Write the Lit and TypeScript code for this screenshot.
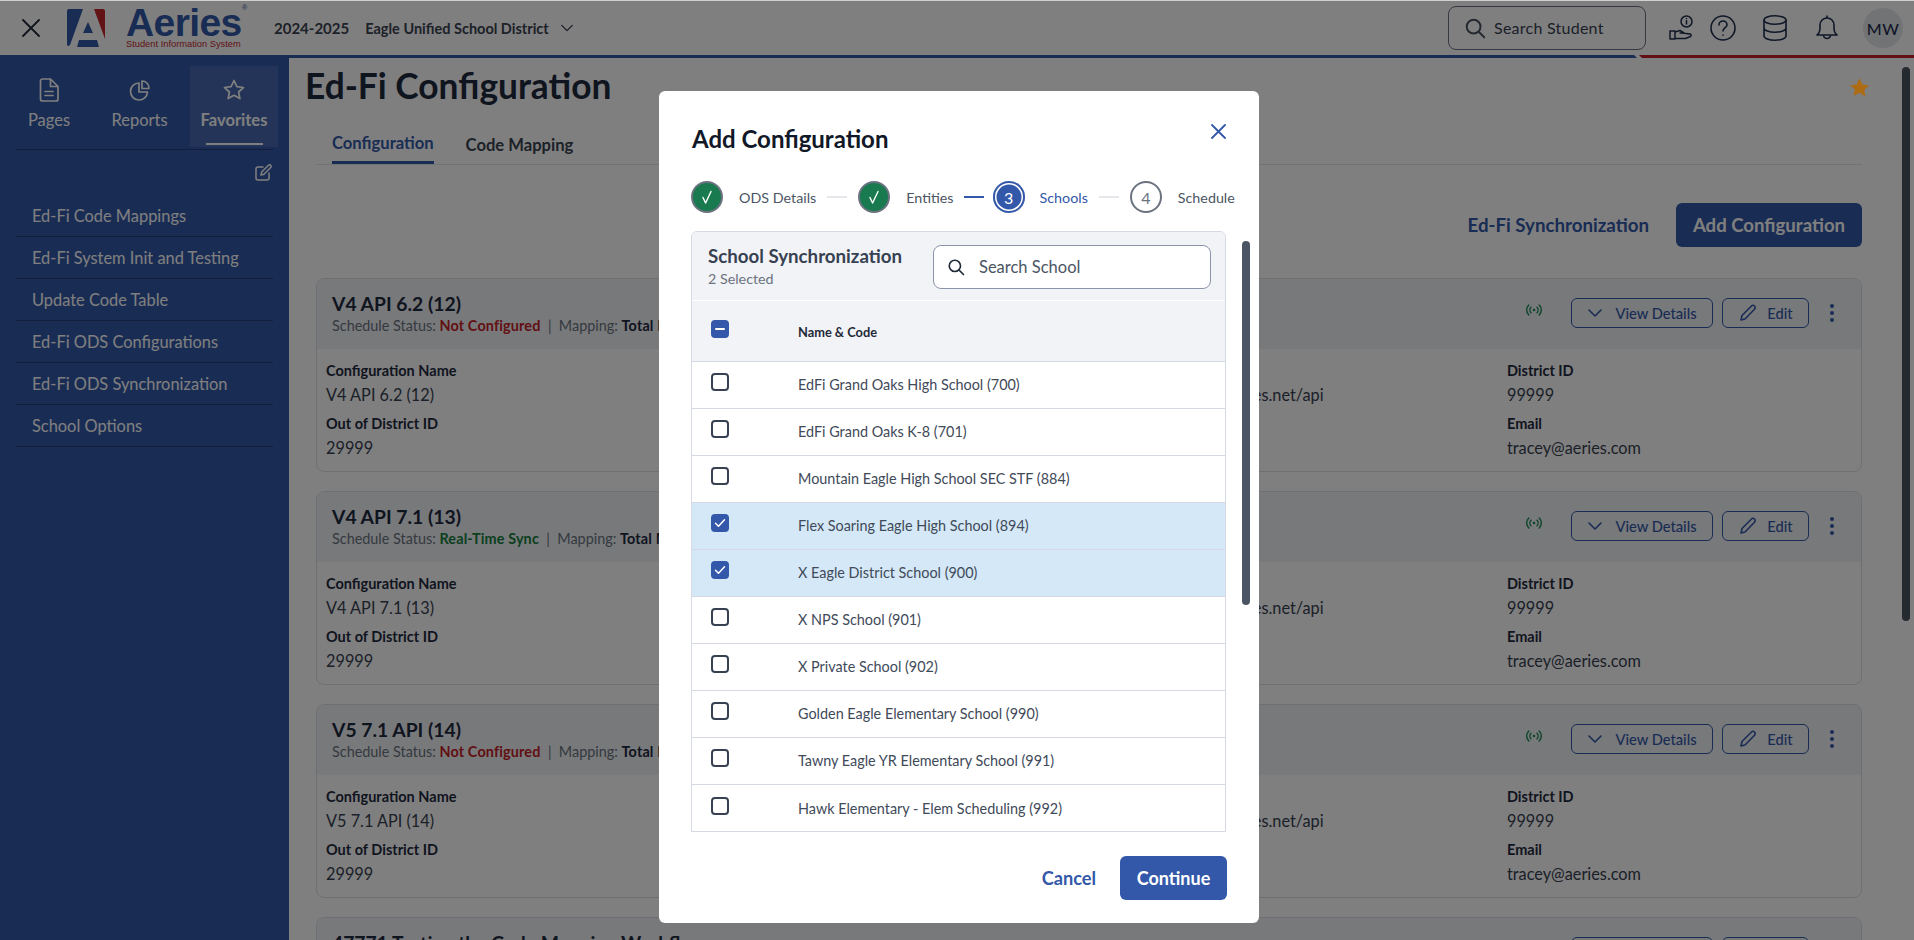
import { LitElement, html, css, svg } from "lit";
import { customElement } from "lit/decorators.js";

const chevron = (size: number) => html`<svg width=${size} height=${size} viewBox="0 0 16 16" fill="none" stroke="currentColor" stroke-width="1.6" stroke-linecap="round" stroke-linejoin="round"><path d="M2 5l6 6 6-6"/></svg>`;
const searchIcon = (size: number) => html`<svg width=${size} height=${size} viewBox="0 0 24 24" fill="none" stroke="currentColor" stroke-width="2.2" stroke-linecap="round"><circle cx="10.5" cy="10.500" r="7.5"/><path d="M16 16l6 6"/></svg>`;
const check = svg`<path d="M4.5 9.3l3 3 6-6.6" fill="none" stroke="#fff" stroke-width="1.5" stroke-linecap="round" stroke-linejoin="round"/>`;
const bigCheck = svg`<path d="M5 9.500l2.600 5.500L13 3.500" fill="none" stroke="#fff" stroke-width="1.400" stroke-linecap="round" stroke-linejoin="round"/>`;

const cards = [
  { name: "V4 API 6.2 (12)", status: "Not Configured", ok: false },
  { name: "V4 API 7.1 (13)", status: "Real-Time Sync", ok: true },
  { name: "V5 7.1 API (14)", status: "Not Configured", ok: false },
  { name: "47771 Testing the Code Mapping Workflow", status: "Not Configured", ok: false },
];
const schools = [
  ["EdFi Grand Oaks High School (700)", false],
  ["EdFi Grand Oaks K-8 (701)", false],
  ["Mountain Eagle High School SEC STF (884)", false],
  ["Flex Soaring Eagle High School (894)", true],
  ["X Eagle District School (900)", true],
  ["X NPS School (901)", false],
  ["X Private School (902)", false],
  ["Golden Eagle Elementary School (990)", false],
  ["Tawny Eagle YR Elementary School (991)", false],
  ["Hawk Elementary - Elem Scheduling (992)", false],
] as [string, boolean][];
const links = ["Ed-Fi Code Mappings", "Ed-Fi System Init and Testing", "Update Code Table", "Ed-Fi ODS Configurations", "Ed-Fi ODS Synchronization", "School Options"];

@customElement("app-root")
export class AppRoot extends LitElement {
  static styles = css`
    :host { display: block; width: 1914px; height: 940px; overflow: hidden; position: relative; font-family: Lato, "Noto Sans", sans-serif; color: #1f2937; background: #fff; }
    * { box-sizing: border-box; }
    svg { display: block; flex: none; }
    .page { height: 940px; border-top: 1px solid #d0d0d0; display: flex; flex-direction: column; overflow: hidden; }
    .topbar { height: 54px; flex: none; display: flex; align-items: center; padding-right: 11px; color: #1f2f4f; }
    .x { margin-left: 22px; color: #1f2937; }
    .logo { margin-left: 27px; }
    .brand { margin-left: 21px; display: flex; flex-direction: column; width: 122px; }
    .aeries { font: 700 39px/31px "Liberation Sans", Arial, sans-serif; color: #3358a9; letter-spacing: -0.6px; height: 31px; position: relative; }
    .aeries sup { position: absolute; left: 116px; top: -7px; font-size: 7px; line-height: 16px; font-weight: 400; letter-spacing: 0; }
    .tagline { font: 400 9.3px/10px "Liberation Sans", Arial, sans-serif; color: #c2272d; white-space: nowrap; margin-top: 1px; }
    .year { margin-left: 26px; font-size: 15px; font-weight: 700; color: #3b4351; }
    .district { margin-left: 16px; font-size: 14.5px; font-weight: 700; color: #3b4351; }
    .dchev { margin-left: 11px; color: #3b4351; }
    .right { margin-left: auto; display: flex; align-items: center; }
    .stud { width: 198px; height: 44px; border: 1px solid #6b7280; border-radius: 8px; display: flex; align-items: center; padding-left: 15px; gap: 8px; font-size: 16px; color: #374151; margin-top: -1px; letter-spacing: .25px; }
    .stud svg { color: #4b5563; }
    .hand { margin-left: 23px; } .help { margin-left: 17px; } .db { margin-left: 27px; } .bell { margin-left: 29px; }
    .avatar { margin-left: 25px; width: 40px; height: 40px; border-radius: 50%; background: #e5e7eb; display: flex; align-items: center; justify-content: center; font-size: 16px; font-weight: 500; color: #1f2f4f; letter-spacing: .5px; }
    .rule { height: 3px; flex: none; display: flex; }
    .rule .blue { width: 1637px; background: #3358a9; clip-path: polygon(0 0, 1634px 0, 1637px 100%, 0 100%); }
    .rule .red { flex: 1; margin-left: 2px; background: #c42126; clip-path: polygon(0 0, 100% 0, 100% 100%, 3px 100%); }
    .body { flex: 1; display: flex; min-height: 0; }
    .side { width: 289px; flex: none; background: #3359a9; color: #fff; }
    .tabs { display: grid; grid-template-columns: 88px 93px 92px; margin: 8px 0 0 5px; }
    .stab { height: 81px; padding-top: 12px; display: flex; flex-direction: column; align-items: center; font-size: 16.5px; line-height: 20px; }
    .stab span { margin-top: 8px; }
    .stab.on { margin-left: 4px; background: rgba(255,255,255,.1); font-weight: 700; }
    .stab.on span::after { content: ""; display: block; width: 57px; height: 2px; background: #fff; margin: 13px auto 0; }
    .sline { height: 1px; background: #24407c; margin: 2px 16px 0; }
    .sedit { display: flex; justify-content: flex-end; margin: 14px 17px 0 0; height: 17px; }
    .slist { list-style: none; margin: 14px 16px 0; padding: 0; }
    .slist li { height: 42px; padding: 0 0 1px 16px; border-bottom: 1px solid #24407c; display: flex; align-items: center; font-size: 16.4px; }
    .main { flex: 1; min-width: 0; padding: 8px 52px 0 27px; }
    .thead { display: flex; justify-content: space-between; align-items: center; margin: 0 -8px 0 -11px; height: 40px; }
    h1 { margin: 0; font-size: 35.3px; line-height: 40px; font-weight: 700; color: #1f2a3f; }
    .star { position: relative; z-index: 20; margin-top: 2px; }
    .ptabs { display: flex; gap: 32px; padding-left: 16px; margin-top: 27px; border-bottom: 1px solid #e5e7eb; align-items: flex-start; height: 32px; }
    .ptab { font-size: 16.6px; line-height: 20px; font-weight: 700; color: #3b4351; padding-top: 2px; }
    .ptab.on { color: #3358a9; padding: 0 0 8px; border-bottom: 3px solid #3358a9; }
    .actions { display: flex; justify-content: flex-end; align-items: center; gap: 27px; margin-top: 38px; }
    .alink { font-size: 18.7px; font-weight: 700; color: #3358a9; }
    .abtn { height: 44px; width: 186px; background: #3358a9; border-radius: 6px; color: #fff; font-size: 18.6px; font-weight: 700; display: flex; align-items: center; justify-content: center; }
    .cards { margin-top: 31px; display: flex; flex-direction: column; gap: 19px; }
    .card { height: 194px; flex: none; border: 1px solid #dcdfe6; border-radius: 8px; overflow: hidden; }
    .chead { height: 70px; background: #f0f2f6; display: flex; justify-content: space-between; padding: 13px 0 0 15px; }
    .ctitle { font-size: 19.3px; line-height: 24px; font-weight: 700; color: #1f2a3f; white-space: nowrap; }
    .csub { font-size: 14.4px; line-height: 18px; margin-top: 1px; color: #6b7280; white-space: nowrap; }
    .csub b { letter-spacing: .15px; }
    .csub b.no { color: #c42126; } .csub b.yes { color: #16803f; } .csub b.tot { color: #1f2a3f; }
    .cact { display: flex; align-items: center; height: 30px; margin: 6px 0 0; padding-right: 26px; }
    .sig { margin: -6px 29px 0 0; color: #1a8a55; }
    .obtn { height: 30px; border: 1px solid #3358a9; border-radius: 6px; color: #3358a9; display: flex; align-items: center; justify-content: center; gap: 12px; font-size: 14.7px; font-weight: 500; }
    .obtn.view { width: 142px; margin-right: 9px; }
    .obtn.edit { width: 87px; margin-right: 20px; gap: 9px; }
    .kebab { color: #3358a9; }
    .cbody { display: grid; grid-template-columns: repeat(4, 393.67px); padding: 12px 0 0 9px; }
    .k { font-size: 14.5px; line-height: 20px; font-weight: 700; color: #1f2a3f; }
    .v { font-size: 16.3px; line-height: 24px; margin: 2px 0 7px; color: #374151; white-space: nowrap; }
    .pscroll { position: absolute; left: 1902px; top: 67px; width: 8px; height: 554px; background: #4b5563; border-radius: 4px; z-index: 5; }
    .overlay { position: absolute; inset: 1px 0 0 0; background: rgba(0,0,0,.5); z-index: 10; }
    .modal { position: absolute; left: 659px; top: 90px; width: 600px; height: 832px; background: #fff; border-radius: 6px; padding: 32px 33px 0 32px; }
    .close { position: absolute; left: 552px; top: 33px; color: #3358a9; }
    h2 { margin: 0 0 0 1px; font-size: 24px; line-height: 32px; font-weight: 700; color: #111827; }
    .steps { display: flex; align-items: center; margin-top: 26px; height: 32px; white-space: nowrap; width: 560px; }
    .dot { width: 32px; height: 32px; flex: none; border-radius: 50%; display: flex; align-items: center; justify-content: center; font-size: 16px; }
    .dot.done { background: #1a7a4f; border: 2px solid #6b7280; }
    .dot.cur { background: #3358a9; color: #fff; box-shadow: inset 0 0 0 2px #3358a9, inset 0 0 0 3.5px #fff; }
    .dot.todo { border: 2px solid #6b7280; color: #6b7280; }
    .lab { margin-left: 16px; font-size: 14.3px; color: #4b5563; }
    .lab.cur { margin-left: 15px; color: #3358a9; }
    .ln { width: 20px; height: 2px; background: #e5e7eb; margin: 0 11px; flex: none; }
    .ln.on { background: #3358a9; margin: 0 9px 0 10px; }
    .panel { margin-top: 18px; border: 1px solid #d5d9e3; border-radius: 6px 6px 0 0; width: 535px; height: 601px; overflow: hidden; }
    .phead { height: 69px; background: #f1f3f7; border-bottom: 1px solid #fff; display: flex; justify-content: space-between; padding: 12px 14px 0 16px; }
    .ptitle { font-size: 18.7px; line-height: 24px; font-weight: 700; color: #374151; }
    .psub { font-size: 14.3px; line-height: 18px; color: #6b7280; margin-top: 2px; }
    .sschool { width: 278px; height: 44px; background: #fff; border: 1px solid #8b94a8; border-radius: 8px; display: flex; align-items: center; padding: 0 0 1px 13px; gap: 14px; font-size: 16.5px; color: #4b5563; margin-top: 1px; }
    .sschool svg { color: #1f2937; }
    .row { height: 47px; display: flex; align-items: center; padding: 0 0 1px 19px; border-bottom: 1px solid #d5d9e3; font-size: 14.4px; color: #414a59; }
    .row.hd { height: 61px; padding: 2px 0 0 19px; background: #f1f3f7; font-size: 12.8px; font-weight: 700; color: #1f2937; }
    .row.sel { background: #d4e8f7; }
    .row:last-child { border-bottom: 0; }
    .box { width: 18px; height: 18px; flex: none; margin: -5px 69px 0 0; border: 2px solid #374151; border-radius: 4px; }
    .hd .box { margin-top: -7px; }
    .box.fill { background: #3358a9; border: 0; }
    .foot { display: flex; justify-content: flex-end; align-items: center; gap: 24px; margin: 24px -1px 0 0; }
    .cancel { color: #3358a9; font-size: 18.2px; font-weight: 700; }
    .cont { width: 107px; height: 44px; background: #3358a9; border-radius: 6px; color: #fff; font-size: 18px; font-weight: 700; display: flex; align-items: center; justify-content: center; }
    .mscroll { position: absolute; left: 583px; top: 150px; width: 8px; height: 364px; background: #4b5563; border-radius: 4px; }
  `;

  private card(c: { name: string; status: string; ok: boolean }) {
    return html`<article class="card">
      <div class="chead">
        <div>
          <div class="ctitle">${c.name}</div>
          <div class="csub">Schedule Status: <b class=${c.ok ? "yes" : "no"}>${c.status}</b> &nbsp;|&nbsp; Mapping: <b class="tot">Total Mapped: 0</b></div>
        </div>
        <div class="cact">
          <svg class="sig" width="16" height="12" viewBox="0 0 16 12" fill="none" stroke="currentColor" stroke-width="1.4" stroke-linecap="round"><circle cx="8" cy="6" r="1.3" fill="currentColor" stroke="none"/><path d="M5 3.2a4 4 0 000 5.6M11 3.2a4 4 0 010 5.6M2.8 1a7 7 0 000 10M13.2 1a7 7 0 010 10"/></svg>
          <div class="obtn view">${chevron(16)}<span>View Details</span></div>
          <div class="obtn edit"><svg width="20" height="20" viewBox="0 0 20 20" fill="none" stroke="currentColor" stroke-width="1.6" stroke-linejoin="round"><path d="M3 17l1-4.5L13.5 3a2 2 0 013 0 2.2 2.2 0 010 3.2L7 16z"/></svg><span>Edit</span></div>
          <svg class="kebab" width="6" height="20" viewBox="0 0 6 20" fill="currentColor"><circle cx="3" cy="3" r="2"/><circle cx="3" cy="10" r="2"/><circle cx="3" cy="17" r="2"/></svg>
        </div>
      </div>
      <div class="cbody">
        <div><div class="k">Configuration Name</div><div class="v">${c.name}</div><div class="k">Out of District ID</div><div class="v">29999</div></div>
        <div><div class="k">Year</div><div class="v">2024-2025</div></div>
        <div><div class="k">ODS URL</div><div class="v">https://edfi-ods.aeries.net/api</div></div>
        <div><div class="k">District ID</div><div class="v">99999</div><div class="k">Email</div><div class="v">tracey@aeries.com</div></div>
      </div>
    </article>`;
  }

  render() {
    return html`
      <div class="page">
        <header class="topbar">
          <svg class="x" width="18" height="18" viewBox="0 0 18 18" fill="none" stroke="currentColor" stroke-width="1.8" stroke-linecap="round"><path d="M1 1l16 16M17 1L1 17"/></svg>
          <svg class="logo" width="38" height="38" viewBox="0 0 38 38"><path d="M2 0H16L3 36Q1 38 0 36V2Q0 0 2 0Z" fill="#3358a9"/><path d="M27 0H36Q38 0 38 2V30Z" fill="#c2272d"/><path d="M21 13L26 24H16Z" fill="#3358a9"/><path d="M12 31H30L32 38H10Z" fill="#3358a9"/></svg>
          <div class="brand"><div class="aeries">Aeries<sup>®</sup></div><div class="tagline">Student Information System</div></div>
          <span class="year">2024-2025</span>
          <span class="district">Eagle Unified School District</span>
          <span class="dchev">${chevron(14)}</span>
          <div class="right">
            <div class="stud">${searchIcon(22)}<span>Search Student</span></div>
            <svg class="hand" width="24" height="26" viewBox="0 0 24 26" fill="none" stroke="currentColor" stroke-width="1.5" stroke-linejoin="round" stroke-linecap="round"><circle cx="17.5" cy="6.5" r="5.5"/><path d="M17.5 5.5v3.5M17.5 3.4v.2"/><path d="M1 16h5v8H1zM6 17l5-1.500 4 2.500h-4M13 18l8 1q2 1 .5 2.500l-5 2H6"/></svg>
            <svg class="help" width="26" height="26" viewBox="0 0 26 26" fill="none" stroke="currentColor" stroke-width="1.6" stroke-linecap="round"><circle cx="13" cy="13" r="12"/><path d="M9 10a4 4 0 118 0c0 2.500-4 3-4 6M13 20v.2"/></svg>
            <svg class="db" width="24" height="26" viewBox="0 0 24 26" fill="none" stroke="currentColor" stroke-width="1.6"><ellipse cx="12" cy="5" rx="11" ry="4.200"/><path d="M1 5v16c0 2.300 5 4.200 11 4.200s11-1.900 11-4.200V5M1 13c0 2.300 5 4.200 11 4.200s11-1.900 11-4.200"/></svg>
            <svg class="bell" width="22" height="26" viewBox="0 0 22 26" fill="none" stroke="currentColor" stroke-width="1.6" stroke-linejoin="round" stroke-linecap="round"><path d="M1 20c2-1.500 3-3.500 3-7V10a7 7 0 0114 0v3c0 3.500 1 5.500 3 7zM11 1v2M7.500 20a3.500 3.500 0 007 0"/></svg>
            <div class="avatar">MW</div>
          </div>
        </header>
        <div class="rule"><div class="blue"></div><div class="red"></div></div>
        <div class="body">
          <nav class="side">
            <div class="tabs">
              <div class="stab"><svg width="24" height="24" viewBox="0 0 24 24" fill="none" stroke="currentColor" stroke-width="1.700" stroke-linejoin="round" stroke-linecap="round"><path d="M5.500 1h8L21 8.500V21a2 2 0 01-2 2H5.500a2 2 0 01-2-2V3a2 2 0 012-2zM13.500 1v7.500H21M8 13.500h8M8 17.500h8"/></svg><span>Pages</span></div>
              <div class="stab"><svg width="24" height="24" viewBox="0 0 24 24" fill="none" stroke="currentColor" stroke-width="1.700" stroke-linejoin="round"><path d="M11 5a8.500 8.500 0 108.500 9H11z"/><path d="M14 3a7 7 0 017 7.500h-7z"/></svg><span>Reports</span></div>
              <div class="stab on"><svg width="24" height="24" viewBox="0 0 24 24" fill="none" stroke="currentColor" stroke-width="1.700" stroke-linejoin="round"><path d="M12 2.500l2.900 6.200 6.600.8-4.900 4.500 1.300 6.600-5.900-3.300-5.900 3.300 1.300-6.600-4.900-4.500 6.600-.8z"/></svg><span>Favorites</span></div>
            </div>
            <div class="sline"></div>
            <div class="sedit"><svg width="17" height="17" viewBox="0 0 17 17" fill="none" stroke="currentColor" stroke-width="1.500" stroke-linejoin="round" stroke-linecap="round"><path d="M8 3H3a2 2 0 00-2 2v9a2 2 0 002 2h9a2 2 0 002-2V9"/><path d="M6 11l.7-3L13.500 1.200a1.500 1.500 0 012.200 0 1.500 1.500 0 010 2.200L9 10.300z"/></svg></div>
            <ul class="slist">${links.map((l) => html`<li>${l}</li>`)}</ul>
          </nav>
          <main class="main">
            <div class="thead">
              <h1>Ed-Fi Configuration</h1>
              <svg class="star" width="21" height="21" viewBox="0 0 24 24" fill="#ad6c14"><path d="M12 1.500l3.300 7 7.700 1-5.600 5.300 1.400 7.700L12 18l-6.800 3.500 1.400-7.700L1 9.500l7.700-1z"/></svg>
            </div>
            <div class="ptabs"><div class="ptab on">Configuration</div><div class="ptab">Code Mapping</div></div>
            <div class="actions"><span class="alink">Ed-Fi Synchronization</span><div class="abtn">Add Configuration</div></div>
            <div class="cards">${cards.map((c) => this.card(c))}</div>
          </main>
        </div>
      </div>
      <div class="pscroll"></div>
      <div class="overlay">
        <section class="modal">
          <svg class="close" width="15" height="15" viewBox="0 0 15 15" fill="none" stroke="currentColor" stroke-width="1.800" stroke-linecap="round"><path d="M1 1l13 13M14 1L1 14"/></svg>
          <h2>Add Configuration</h2>
          <div class="steps">
            <div class="dot done"><svg width="18" height="18" viewBox="0 0 18 18">${bigCheck}</svg></div><span class="lab">ODS Details</span><div class="ln"></div>
            <div class="dot done"><svg width="18" height="18" viewBox="0 0 18 18">${bigCheck}</svg></div><span class="lab">Entities</span><div class="ln on"></div>
            <div class="dot cur">3</div><span class="lab cur">Schools</span><div class="ln"></div>
            <div class="dot todo">4</div><span class="lab">Schedule</span>
          </div>
          <div class="panel">
            <div class="phead">
              <div><div class="ptitle">School Synchronization</div><div class="psub">2 Selected</div></div>
              <div class="sschool">${searchIcon(18)}<span>Search School</span></div>
            </div>
            <div class="row hd"><div class="box fill"><svg width="18" height="18" viewBox="0 0 18 18"><path d="M5 9h8" stroke="#fff" stroke-width="2" stroke-linecap="round"/></svg></div>Name &amp; Code</div>
            ${schools.map(([n, s]) => html`<div class="row ${s ? "sel" : ""}"><div class="box ${s ? "fill" : ""}">${s ? html`<svg width="18" height="18" viewBox="0 0 18 18">${check}</svg>` : ""}</div>${n}</div>`)}
          </div>
          <div class="foot"><span class="cancel">Cancel</span><div class="cont">Continue</div></div>
          <div class="mscroll"></div>
        </section>
      </div>
    `;
  }
}
